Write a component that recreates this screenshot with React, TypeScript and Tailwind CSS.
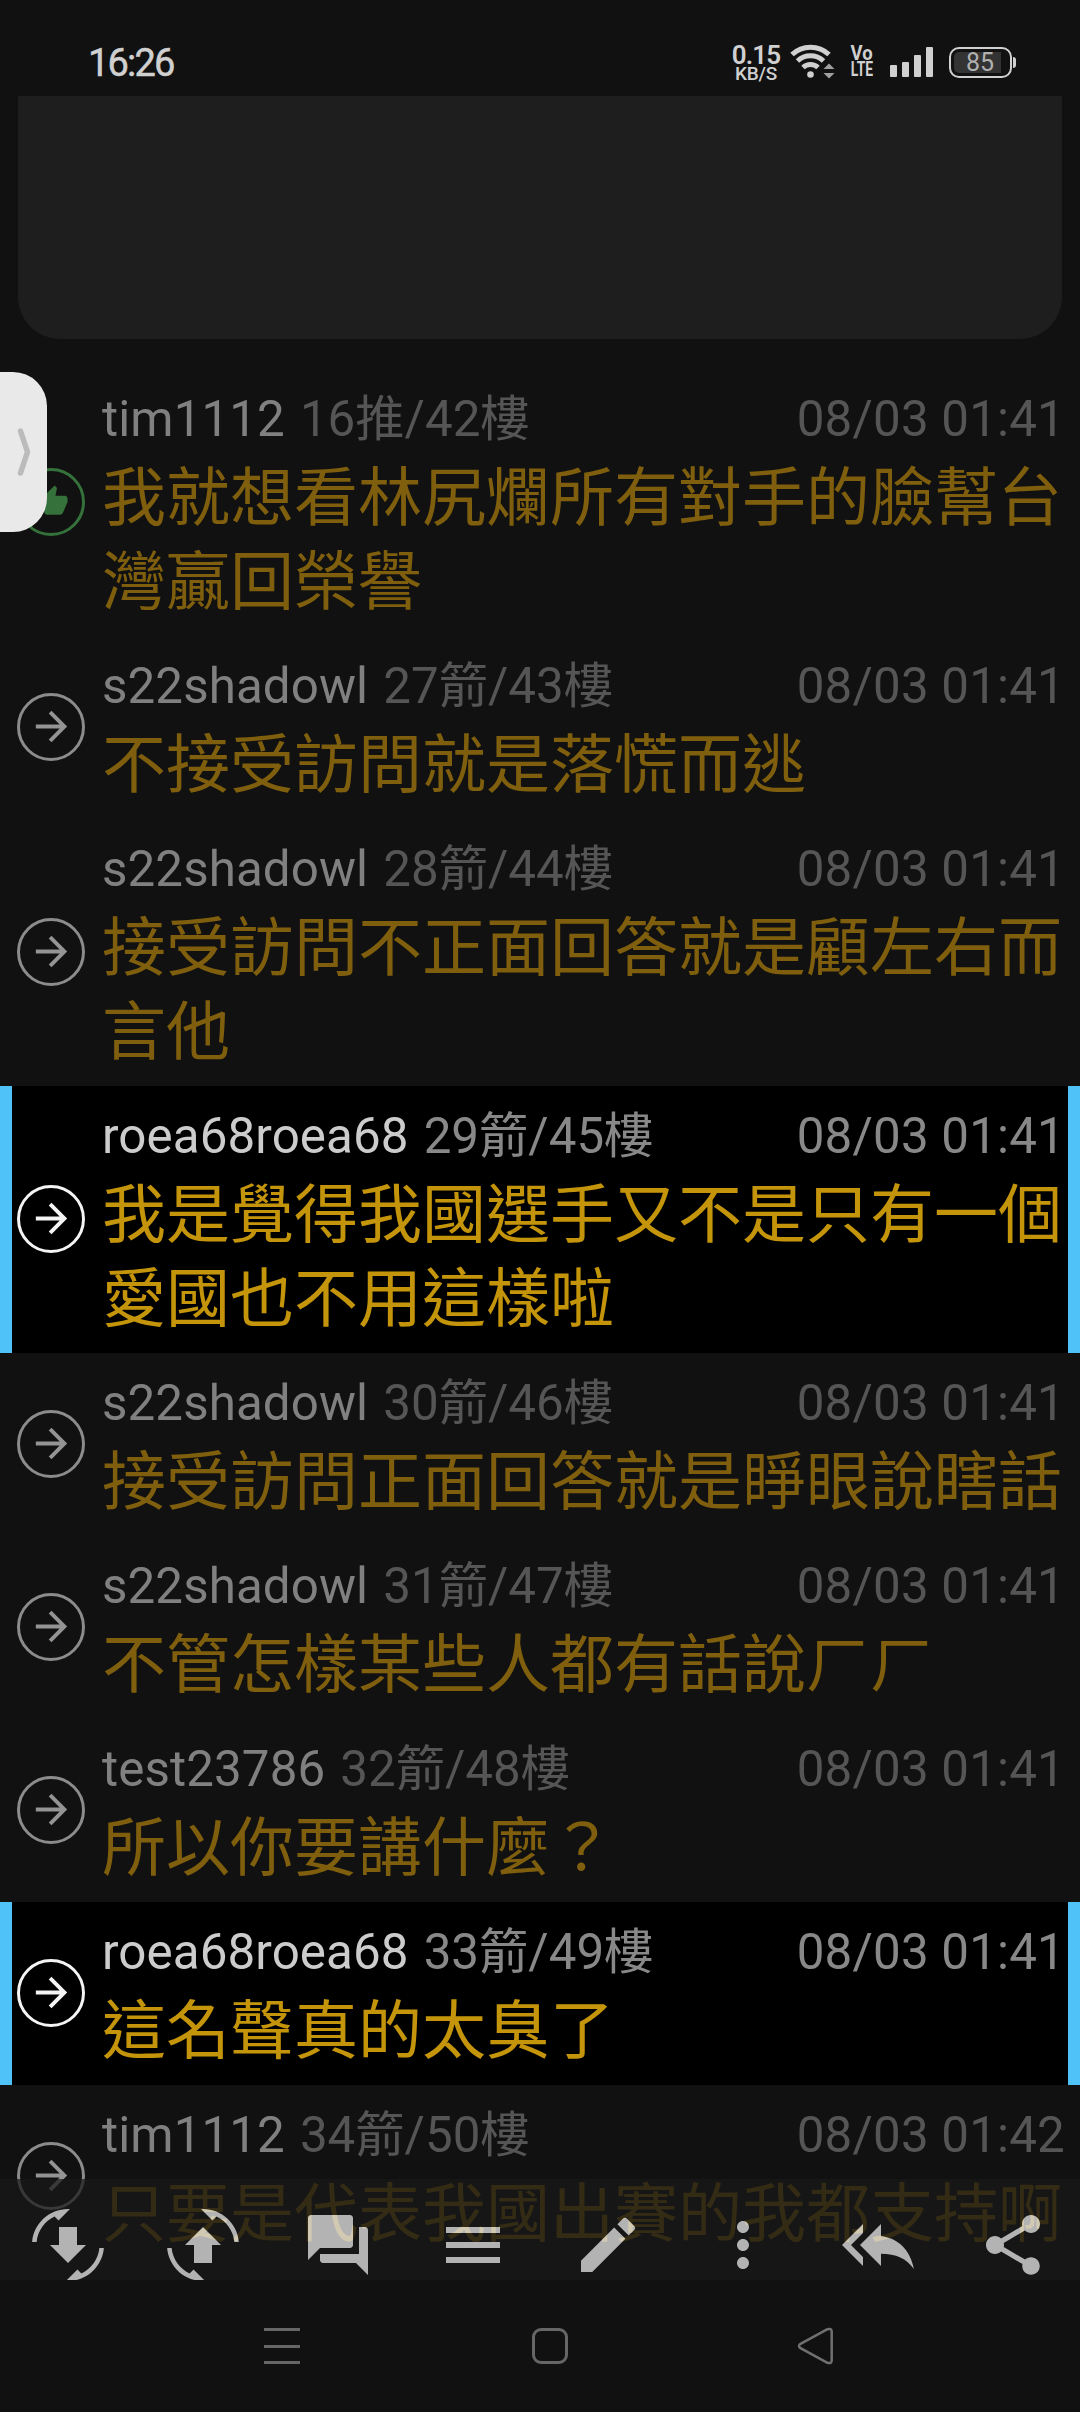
import React from "react";
import {
  MdArrowForward,
  MdEdit,
  MdForum,
  MdMenu,
  MdMoreVert,
  MdReplyAll,
  MdShare,
  MdThumbUp,
} from "react-icons/md";

type Push = {
  user: string;
  floor: string;
  time: string;
  lines: string[];
  kind: "push" | "arrow";
  active?: boolean;
};

const pushes: Push[] = [
  { user: "tim1112", floor: "16推/42樓", time: "08/03 01:41", lines: ["我就想看林尻爛所有對手的臉幫台", "灣贏回榮譽"], kind: "push" },
  { user: "s22shadowl", floor: "27箭/43樓", time: "08/03 01:41", lines: ["不接受訪問就是落慌而逃"], kind: "arrow" },
  { user: "s22shadowl", floor: "28箭/44樓", time: "08/03 01:41", lines: ["接受訪問不正面回答就是顧左右而", "言他"], kind: "arrow" },
  { user: "roea68roea68", floor: "29箭/45樓", time: "08/03 01:41", lines: ["我是覺得我國選手又不是只有一個", "愛國也不用這樣啦"], kind: "arrow", active: true },
  { user: "s22shadowl", floor: "30箭/46樓", time: "08/03 01:41", lines: ["接受訪問正面回答就是睜眼說瞎話"], kind: "arrow" },
  { user: "s22shadowl", floor: "31箭/47樓", time: "08/03 01:41", lines: ["不管怎樣某些人都有話說ㄏㄏ"], kind: "arrow" },
  { user: "test23786", floor: "32箭/48樓", time: "08/03 01:41", lines: ["所以你要講什麼？"], kind: "arrow" },
  { user: "roea68roea68", floor: "33箭/49樓", time: "08/03 01:41", lines: ["這名聲真的太臭了"], kind: "arrow", active: true },
  { user: "tim1112", floor: "34箭/50樓", time: "08/03 01:42", lines: ["只要是代表我國出賽的我都支持啊"], kind: "arrow" },
];

function StatusBar() {
  return (
    <header className="flex h-24 shrink-0 items-start pl-[88px] pr-[64px] pt-[42px] font-['Roboto','Noto_Sans',sans-serif] text-[#d0d0d0]">
      <span className="h-10 text-[38px] font-normal leading-[42px] tracking-[-1.8px] [-webkit-text-stroke:0.5px_#d0d0d0]">16:26</span>
      <div className="ml-auto flex h-10 items-start">
        <div className="flex w-[46px] flex-col items-center pt-[3px] font-medium">
          <span className="text-[26px] font-semibold leading-[20px] tracking-[-0.9px]">0.15</span>
          <span className="text-[19px] leading-[17px] tracking-[-0.2px]">KB/S</span>
        </div>
        <svg className="ml-[10px]" width="46" height="40" viewBox="789 42 46 40" fill="none" stroke="#d0d0d0" strokeWidth="5">
          <path d="M792 54.500a27 27 0 0 1 37 0" />
          <path d="M797.500 61a19 19 0 0 1 26 0" />
          <path d="M803 67.500a11 11 0 0 1 15 0" />
          <circle cx="810.500" cy="74.500" r="3.300" fill="#d0d0d0" stroke="none" />
          <path d="M823.500 69l5.500-5.500 5.500 5.500zM823.500 73l5.500 5.500 5.500-5.500z" fill="#a0a0a0" stroke="none" />
        </svg>
        <div className="ml-[15px] flex w-[24px] flex-col items-center pt-[4px] text-[21px] font-bold leading-[15.500px]">
          <span className="scale-x-[0.88]">Vo</span>
          <span className="scale-x-[0.66]">LTE</span>
        </div>
        <div className="ml-[16px] flex h-[35px] items-end gap-[5px]">
          <i className="h-[12px] w-[7px] rounded-[1px] bg-[#d0d0d0]" />
          <i className="h-[15px] w-[7px] rounded-[1px] bg-[#d0d0d0]" />
          <i className="h-[22px] w-[7px] rounded-[1px] bg-[#d0d0d0]" />
          <i className="h-[30px] w-[7px] rounded-[1px] bg-[#d0d0d0]" />
        </div>
        <div className="ml-[16px] mt-[5px] flex items-center gap-px">
          <div className="flex h-[31px] w-[63px] rounded-[10px] border-[2px] border-[#d0d0d0] p-[3px]">
            <div className="flex w-[47px] items-center justify-center rounded-l-[5px] bg-[#333] pl-[5px] text-[25px] leading-none text-[#b0b0b0]">
              85
            </div>
          </div>
          <i className="h-[11px] w-[3px] rounded-r-[3px] bg-[#d0d0d0]" />
        </div>
      </div>
    </header>
  );
}

function PushIcon({ kind, active }: Pick<Push, "kind" | "active">) {
  if (kind === "push") {
    return (
      <span className="mb-[2px] flex size-[68px] items-center justify-center rounded-full border-[3px] border-[#35713a] text-[#35713a]">
        <MdThumbUp size={35} />
      </span>
    );
  }
  return (
    <span
      className={
        "mb-[2px] flex size-[68px] items-center justify-center rounded-full border-[3px] " +
        (active ? "border-[#f4f4f4] text-[#f4f4f4]" : "border-[#8c8c8c] text-[#949494]")
      }
    >
      <MdArrowForward size={47} />
    </span>
  );
}

function PushRow({ user, floor, time, lines, kind, active }: Push) {
  return (
    <article
      className={
        "flex shrink-0 items-center border-x-[12px] pl-[5px] pr-[2px] " +
        (active ? "border-[#4fc3f7] bg-black" : "border-transparent")
      }
    >
      <PushIcon kind={kind} active={active} />
      <div className="ml-[17px] min-w-0 flex-1 pb-[18px] pt-[18px]">
        <div
          className={
            "flex h-[63px] whitespace-nowrap font-['Roboto','Noto_Sans_CJK_TC',sans-serif] text-[49.300px] leading-[65px] " +
            (active ? "text-[#888]" : "text-[#555]")
          }
        >
          <span className={active ? "tracking-[0.1px] text-[#ccc]" : "tracking-[0.1px] text-[#808080]"}>{user}</span>
          <span className="ml-[15px]">{floor}</span>
          <span className="ml-auto mr-px tracking-[0.2px]">{time}</span>
        </div>
        <p
          className={
            "whitespace-nowrap font-['Noto_Sans_CJK_TC',sans-serif] text-[64px] leading-[84px] " +
            (active ? "text-[#c4940a]" : "text-[#7f5f0d]")
          }
        >
          {lines.map((line) => (
            <span key={line} className="block">
              {line}
            </span>
          ))}
        </p>
      </div>
    </article>
  );
}

function JumpIcon({ down = false }: { down?: boolean }) {
  return (
    <svg width="72" height="72" viewBox="0 0 24 24" fill="currentColor">
      <g transform={down ? "matrix(-1 0 0 1 24 0)" : undefined}>
        <path d="M16.480 2.520c3.270 1.550 5.610 4.720 5.970 8.480h1.500C23.440 4.840 18.290 0 12 0l-.660.030 3.810 3.810 1.330-1.320z" />
        <path d="M7.520 21.480C4.250 19.940 1.910 16.760 1.550 13H.050C.560 19.160 5.710 24 12 24l.660-.030-3.810-3.810-1.330 1.320z" />
      </g>
      <path d={down ? "M12 18l6-6h-3V6H9v6H6z" : "M12 6l6 6h-3v6H9v-6H6z"} />
    </svg>
  );
}

function Toolbar() {
  const items = [
    <JumpIcon down />,
    <JumpIcon />,
    <MdForum size={72} />,
    <MdMenu size={72} />,
    <MdEdit size={72} />,
    <MdMoreVert size={72} />,
    <MdReplyAll size={72} />,
    <MdShare size={72} />,
  ];
  return (
    <div className="absolute inset-x-0 bottom-0 grid h-[101px] grid-cols-8 overflow-hidden bg-[#181818] pt-[30px] text-[#f2f2f2] opacity-[0.72]">
      {items.map((icon, i) => (
        <button key={i} className="flex justify-center">
          {icon}
        </button>
      ))}
    </div>
  );
}

function SideHandle() {
  return (
    <div className="absolute left-0 top-[276px] flex h-[160px] w-[47px] items-center justify-end rounded-r-[34px] bg-[#e9e9e9]">
      <svg className="mr-[15px]" width="16" height="50" viewBox="0 0 16 50" fill="none" stroke="#bbb" strokeWidth="5.500" strokeLinecap="round" strokeLinejoin="round">
        <path d="M4.500 4l7 21-7 21" />
      </svg>
    </div>
  );
}

function NavBar() {
  return (
    <nav className="flex h-[132px] shrink-0 items-center pl-[264px] text-[#707070]">
      <div className="flex w-[36px] flex-col gap-[13.500px]">
        <i className="h-[3px] bg-[#666]" />
        <i className="h-[3px] bg-[#666]" />
        <i className="h-[3px] bg-[#666]" />
      </div>
      <div className="ml-[232px] size-[36px] rounded-[9px] border-[3px] border-[#666]" />
      <svg className="ml-[229px]" width="38" height="38" viewBox="0 0 38 38" fill="none" stroke="currentColor" strokeWidth="2.500" strokeLinejoin="round">
        <path d="M3.500 16.800 30.500 2.200Q34.500 1 34.700 4.500V33.500Q34.500 37 30.500 35.800L3.500 21.200Q0.500 19 3.500 16.800z" />
      </svg>
    </nav>
  );
}

export default function App() {
  return (
    <div className="flex h-[2412px] w-[1080px] flex-col overflow-hidden bg-[#111]">
      <StatusBar />
      <main className="relative flex h-[2184px] shrink-0 flex-col overflow-hidden">
        <section className="mx-[18px] mb-[30px] h-[243px] shrink-0 rounded-b-[42px] bg-[#1e1e1e]" />
        {pushes.map((push) => (
          <PushRow key={push.floor} {...push} />
        ))}
        <SideHandle />
        <Toolbar />
      </main>
      <NavBar />
    </div>
  );
}
